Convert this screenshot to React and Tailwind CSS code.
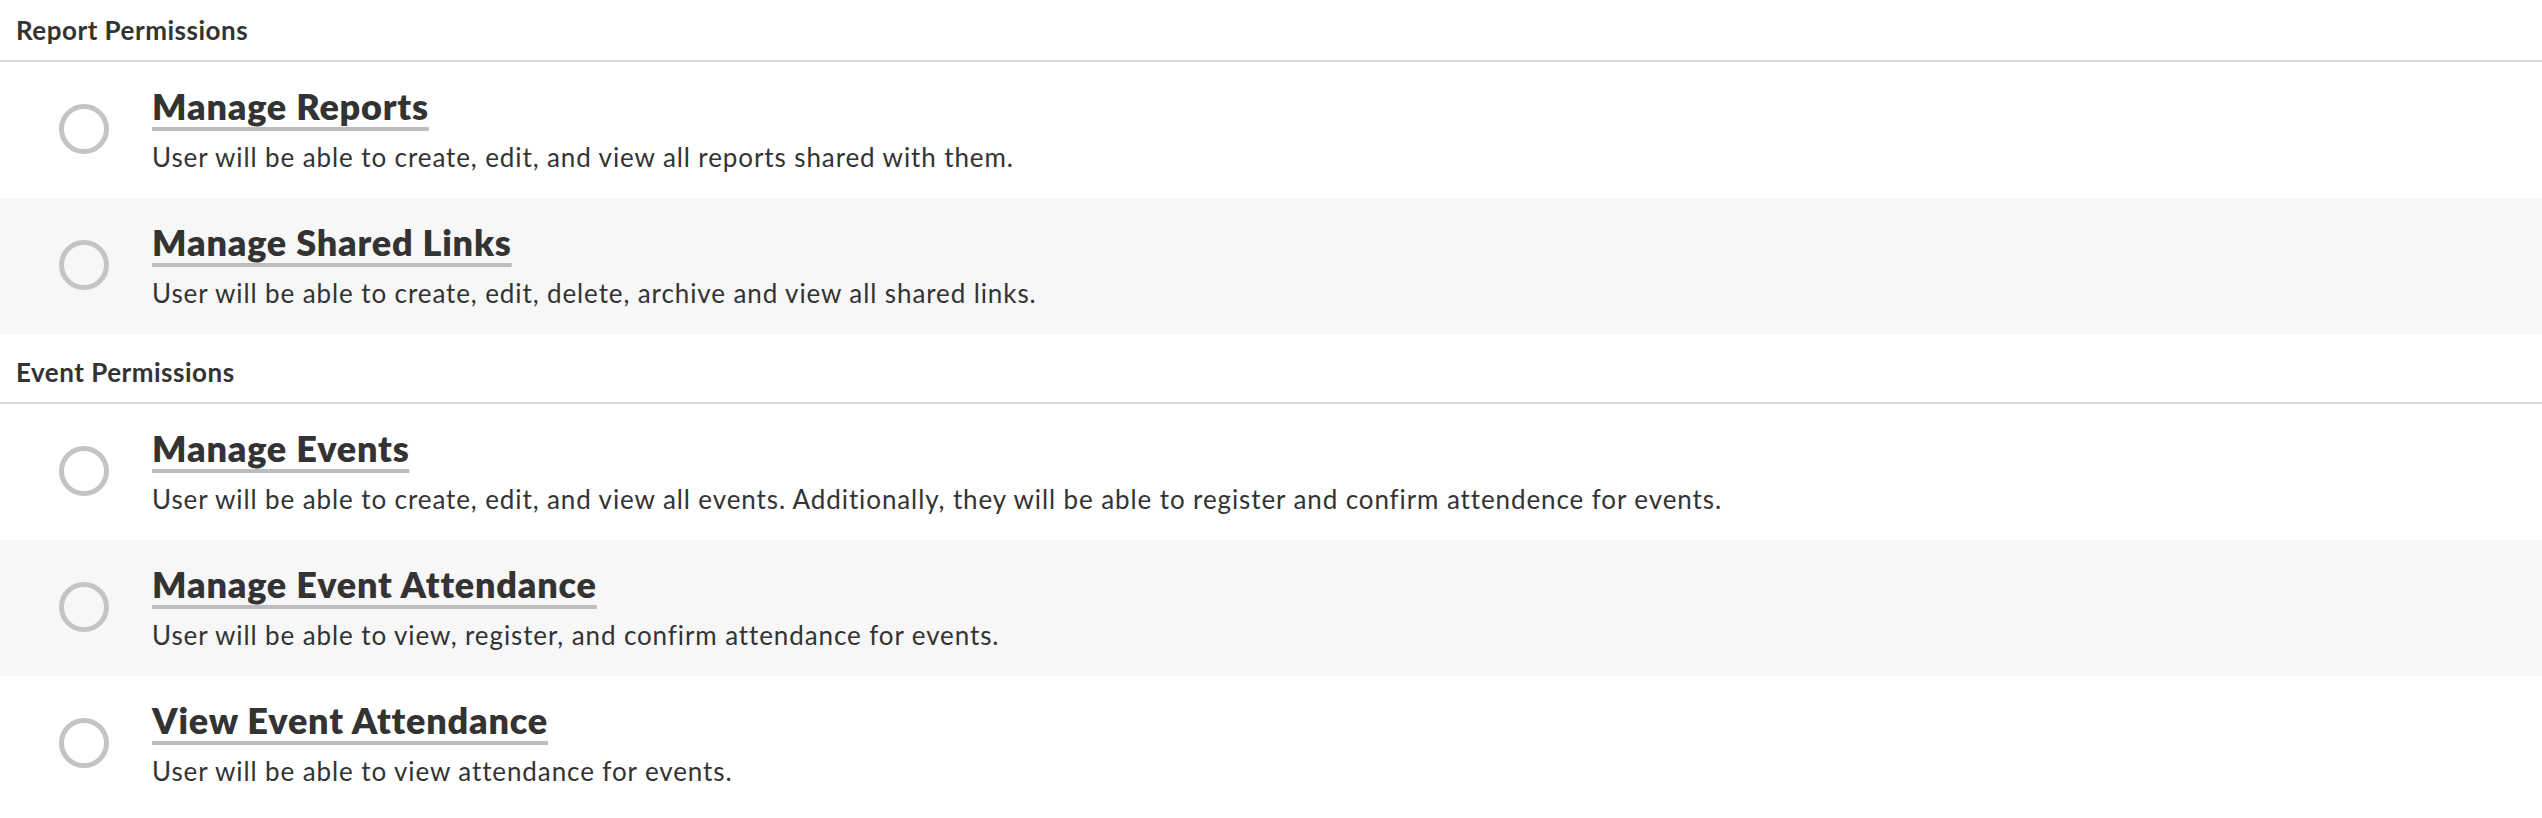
const sections = [
  {
    title: 'Report Permissions',
    items: [
      {
        name: 'Manage Reports',
        description: 'User will be able to create, edit, and view all reports shared with them.',
      },
      {
        name: 'Manage Shared Links',
        description: 'User will be able to create, edit, delete, archive and view all shared links.',
      },
    ],
  },
  {
    title: 'Event Permissions',
    items: [
      {
        name: 'Manage Events',
        description:
          'User will be able to create, edit, and view all events. Additionally, they will be able to register and confirm attendence for events.',
      },
      {
        name: 'Manage Event Attendance',
        description: 'User will be able to view, register, and confirm attendance for events.',
      },
      {
        name: 'View Event Attendance',
        description: 'User will be able to view attendance for events.',
      },
    ],
  },
];

function PermissionRow({ item, shaded }) {
  return (
    <div className={`flex h-[136px] items-start pl-[59px] ${shaded ? 'bg-[#f7f7f7]' : 'bg-white'}`}>
      <span className="self-center mt-[-2px] h-[50px] w-[50px] shrink-0 rounded-full border-[5px] border-[#c4c4c4]" />
      <div className="ml-[43px] pt-[22px]">
        <h3 className="text-[36px] leading-[44px] font-extrabold tracking-[0.8px] text-[#333] underline decoration-[#bdbdbd] decoration-[4px] underline-offset-[7px]">
          {item.name}
        </h3>
        <p className="mt-[13px] text-[26px] leading-[32px] tracking-[0.9px] text-[#333]">{item.description}</p>
      </div>
    </div>
  );
}

export default function App() {
  return (
    <div className="w-full bg-white font-['Lato',sans-serif] text-[#333]">
      {sections.map((section, i) => (
        <section key={section.title} className={i > 0 ? 'pt-2' : ''}>
          {/* cabeçalho da seção */}
          <div className="flex h-[62px] items-center border-b-2 border-[#dadada] pl-4">
            <h2 className="text-[26px] font-bold tracking-[0.5px] text-[#333]">{section.title}</h2>
          </div>
          {section.items.map((item, j) => (
            <PermissionRow key={item.name} item={item} shaded={j % 2 === 1} />
          ))}
        </section>
      ))}
    </div>
  );
}
